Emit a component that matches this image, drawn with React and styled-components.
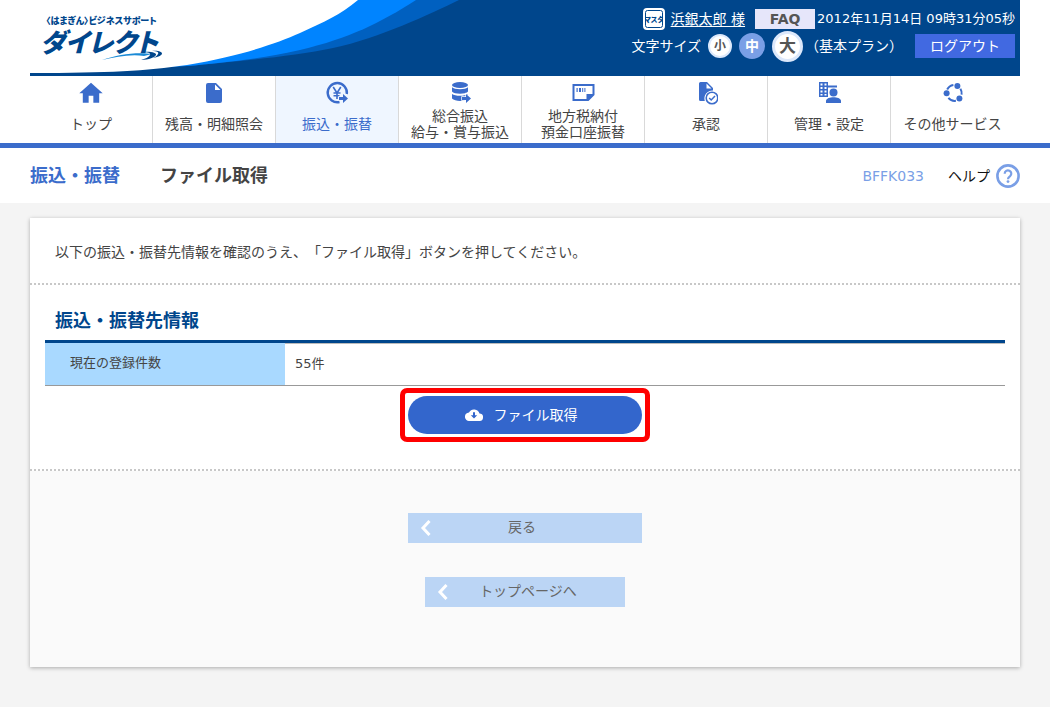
import React from 'react'
import styled, { createGlobalStyle, css } from 'styled-components'

const navy = '#00468c'
const blue = '#3b6ccb'

const GlobalStyle = createGlobalStyle`
  html {
    background-color: #f4f4f4;
  }

  body {
    margin: 0;
    color: #444;
    font-family: "DejaVu Sans", "Noto Sans CJK JP", sans-serif;
    font-size: 14px;
    line-height: 20px;
    text-spacing-trim: space-all;
  }

  *, *::before, *::after {
    box-sizing: border-box;
  }

  button {
    border: 0;
    padding: 0;
    cursor: pointer;
    font: inherit;
  }

  a {
    color: inherit;
    text-decoration: none;
  }
`

const Top = styled.div`
  background-color: white;
`

const Header = styled.header`
  background-color: ${navy};
  color: white;
  display: flex;
  height: 76px;
  justify-content: space-between;
  margin: 0 30px;
  position: relative;
`

const Wave = styled.svg`
  display: block;
  left: 0;
  position: absolute;
  top: 0;
`

const Logo = styled.a`
  color: ${navy};
  display: flex;
  flex-direction: column;
  font-family: "Liberation Sans", "Noto Sans CJK JP", sans-serif;
  font-feature-settings: "palt";
  font-weight: 900;
  padding: 15px 0 0 10px;
  position: relative;
  white-space: nowrap;
`

const LogoSub = styled.span`
  font-size: 9px;
  line-height: 13px;
  padding-left: 6px;
`

const LogoMain = styled.span`
  font-size: 26px;
  font-style: italic;
  line-height: 30px;
`

const Swoosh = styled.svg`
  left: 70px;
  position: absolute;
  top: 50px;
`

const HeaderTools = styled.div`
  display: flex;
  flex-direction: column;
  padding: 8px 5px 0 0;
  position: relative;
`

const ToolRow = styled.div`
  align-items: center;
  display: flex;
  height: ${props => props.$height}px;
  justify-content: flex-end;
`

const MasterBadge = styled.span`
  background-color: white;
  border: 2px solid white;
  border-radius: 4px;
  display: flex;
  margin-right: 6px;
`

const MasterText = styled.text`
  fill: ${navy};
  font-family: "Noto Sans CJK JP", sans-serif;
  font-feature-settings: "palt";
  font-size: 7px;
  font-weight: 900;
  text-anchor: middle;
`

const UserLink = styled.a`
  text-decoration: underline;
  text-underline-offset: 2px;
`

const FaqLink = styled.a`
  background-color: #e6e6fa;
  color: #555;
  font-weight: bold;
  margin: 0 2px 0 10px;
  text-align: center;
  width: 60px;
`

const Clock = styled.time`
  font-size: 13px;
`

const SizeButton = styled.button`
  background-color: ${props => (props.$active ? '#7a9fe6' : 'white')};
  border: ${props => props.$border}px solid ${props => (props.$active ? '#7a9fe6' : '#dce8fb')};
  border-radius: 50%;
  color: ${props => (props.$active ? 'white' : '#555')};
  font-size: ${props => props.$font}px;
  font-weight: bold;
  height: ${props => props.$size}px;
  line-height: 20px;
  margin-left: 7px;
  width: ${props => props.$size}px;
`

const Plan = styled.span`
  margin: 0 12px 0 2px;
`

const LogoutButton = styled.button`
  background-color: #4169e1;
  color: white;
  height: 24px;
  width: 100px;
`

const Nav = styled.nav`
  border-bottom: 5px solid ${blue};
  display: grid;
  grid-template-columns: repeat(8, 1fr);
  padding: 0 36px 0 30px;
`

const NavLink = styled.a`
  align-items: center;
  border-right: 1px solid #d9d9d9;
  display: flex;
  flex-direction: column;
  gap: 3px;
  padding: 5px 0 3px;

  &:last-child {
    border-right: 0;
  }

  svg {
    color: ${blue};
    display: block;
  }

  ${props => props.$active && css`
    background-color: #eff6ff;
    color: ${blue};
  `}
`

const NavLabel = styled.span`
  align-items: center;
  display: flex;
  height: 32px;
  line-height: 16px;
  text-align: center;
  white-space: pre-line;
`

const TitleBar = styled.div`
  align-items: center;
  display: flex;
  height: 55px;
  padding: 0 30px;
`

const Category = styled.p`
  color: ${blue};
  font-size: 18px;
  font-weight: bold;
  margin: 0 40px 0 0;
`

const Title = styled.h1`
  font-size: 18px;
  margin: 0;
`

const ScreenId = styled.span`
  color: #7a9fe6;
  margin-left: auto;
`

const HelpLink = styled.a`
  align-items: center;
  color: #111;
  display: flex;
  gap: 6px;
  margin-left: 24px;
`

const Card = styled.main`
  background-color: white;
  box-shadow: 0 1px 4px rgba(0, 0, 0, 0.3);
  margin: 15px 30px 40px;
`

const Intro = styled.p`
  border-bottom: 2px dotted #c8c8c8;
  margin: 0;
  padding: 24px 25px 21px;
`

const Section = styled.section`
  border-bottom: 2px dotted #c8c8c8;
  padding: 26px 15px 27px;
`

const SectionTitle = styled.h2`
  border-bottom: 3px solid ${navy};
  color: ${navy};
  font-size: 18px;
  line-height: 20px;
  margin: 0;
  padding: 0 10px 9px;
`

const Table = styled.table`
  border-bottom: 1px solid #999;
  border-spacing: 0;
  width: 100%;

  th {
    background-color: #a9d9ff;
    font-size: 13px;
    font-weight: normal;
    height: 42px;
    padding: 0 25px 2px;
    text-align: left;
    width: 25%;
  }

  td {
    border-top: 1px solid #bbb;
    font-size: 13px;
    padding: 0 10px 2px;
  }
`

const Highlight = styled.div`
  border: 5px solid red;
  border-radius: 7px;
  margin: 2px auto 0;
  padding: 3px;
  width: 250px;
`

const DownloadButton = styled.button`
  align-items: center;
  background-color: #3366cc;
  border-radius: 19px;
  color: white;
  display: flex;
  gap: 11px;
  height: 38px;
  justify-content: center;
  padding-right: 8px;
  width: 100%;
`

const Footer = styled.div`
  align-items: center;
  background-color: #fafafa;
  display: flex;
  flex-direction: column;
  gap: 34px;
  padding: 42px 0 60px;
`

const BackButton = styled.button`
  align-items: center;
  background-color: #bbd5f5;
  color: #666;
  display: flex;
  height: 30px;
  padding: 0 ${props => (props.$wide ? 30 : 18)}px 0 12px;
  width: ${props => (props.$wide ? 234 : 200)}px;

  span {
    flex: 1;
    padding-bottom: 2px;
  }
`

const Icon = ({ children, ...rest }) => (
  <svg width="24" height="24" viewBox="0 0 24 24" fill="currentColor" aria-hidden="true" {...rest}>
    {children}
  </svg>
)

const arrow = 'M14 16h4v-3l5 4.600-5 4.400v-3h-4z'

const HomeIcon = () => (
  <Icon viewBox="1.750 1.500 20.500 20.500">
    <path d="M10 20v-6h4v6h5v-8h3L12 3 2 12h3v8z" />
  </Icon>
)

const FileIcon = () => (
  <Icon>
    <path d="M6 2a2 2 0 0 0-2 2v16a2 2 0 0 0 2 2h12a2 2 0 0 0 2-2V8l-6-6zm7 7V3.500L18.500 9z" />
  </Icon>
)

const TransferIcon = () => (
  <Icon>
    <path
      d="M14.500 21A9.600 9.600 0 1 1 21.800 13"
      fill="none"
      stroke="currentColor"
      strokeWidth="2.400"
    />
    <path
      d="M8.200 6l3.800 6 3.800-6M12 12v6M8.500 12h7M8.500 14.800h6"
      fill="none"
      stroke="currentColor"
      strokeWidth="1.600"
    />
    <path d={arrow} stroke="#eff6ff" strokeWidth="1.400" paintOrder="stroke" />
  </Icon>
)

const BulkIcon = () => (
  <Icon>
    <ellipse cx="12" cy="4" rx="8" ry="3" />
    <path d="M4 6.200c2 2.600 14 2.600 16 0v4.300c-2 3-14 3-16 0z" />
    <path d="M4 13c3 2.400 13 2.400 16 0v4.500c-3 3.200-13 3.200-16 0z" />
    <path d={arrow} stroke="white" strokeWidth="1.400" paintOrder="stroke" />
  </Icon>
)

const TaxIcon = () => (
  <Icon>
    <path d="M1.500 3h22v11l-6 6h-16zm2 2v13h12v-5h6V5z" fillRule="evenodd" />
    <path d="M5.500 7h1.200v4H5.500zM8 7h2v4H8zM11.200 7h1v4h-1zM13.400 7h1v4h-1z" />
  </Icon>
)

const ApproveIcon = () => (
  <Icon>
    <path d="M6.500 1H13l6 6v2.500a8 8 0 0 0-8.200 10.500H6.500A1.500 1.500 0 0 1 5 18.500v-16A1.500 1.500 0 0 1 6.500 1zM12.500 2.500v5h5z" fillRule="evenodd" />
    <circle cx="18" cy="17" r="5.800" fill="none" stroke="currentColor" strokeWidth="1.600" />
    <path d="M15.200 17l2 2 3.800-3.900" fill="none" stroke="currentColor" strokeWidth="1.500" />
  </Icon>
)

const AdminIcon = () => (
  <Icon>
    <path
      d="M2 1h9v3.500h9v2h-9V16H2zM3.500 2.500v2h2v-2zm4 0v2h2v-2zm-4 3.500v2h2V6zm4 0v2h2V6zm-4 3.500v2h2v-2zm4 0v2h2v-2zm-4 3.500v1.500h2V13zm4 0v1.500h2V13z"
      fillRule="evenodd"
    />
    <circle cx="16.500" cy="11.500" r="4" stroke="white" paintOrder="stroke" />
    <path d="M9 22v-2.500c1-4.500 14-4.500 15 0V22z" />
  </Icon>
)

const OtherIcon = () => (
  <Icon>
    <path
      d="M6.200 8.500a8 8 0 0 1 6.200-4.600M19.400 7.700a8.500 8.500 0 0 1 1.200 6M14.900 19.800a8.200 8.200 0 0 1-7.500-3"
      fill="none"
      stroke="currentColor"
      strokeWidth="2"
    />
    <circle cx="16.400" cy="5" r="3" />
    <circle cx="5.600" cy="12.200" r="3" />
    <circle cx="18.400" cy="17.500" r="3" />
  </Icon>
)

const HelpIcon = () => (
  <svg width="24" height="24" viewBox="0 0 24 24" fill="none" stroke="#7a9fe6" aria-hidden="true">
    <circle cx="12" cy="12" r="10.600" strokeWidth="2.600" />
    <path d="M8.700 9.700a3.300 3.300 0 1 1 5.400 2.500c-1.300 1-2.100 1.500-2.100 3" strokeWidth="2.200" />
    <circle cx="12" cy="17.600" r="1.400" fill="#7a9fe6" stroke="none" />
  </svg>
)

const CloudIcon = () => (
  <svg width="18" height="12" viewBox="0 0 18 12" aria-hidden="true">
    <path
      d="M14.500 4.600A5.700 5.700 0 0 0 4 3.400 4.300 4.300 0 0 0 4.500 12h9.700a3.700 3.700 0 0 0 .3-7.400z"
      fill="white"
    />
    <path d="M8 3.200h2v3h2.200L9 9.400 5.800 6.200H8z" fill="#3366cc" />
  </svg>
)

const ChevronIcon = () => (
  <svg width="12" height="16" viewBox="0 0 12 16" aria-hidden="true">
    <path d="M9.500 1L3 8l6.500 7" fill="none" stroke="white" strokeWidth="3" />
  </svg>
)

const navItems = [
  { label: 'トップ', icon: HomeIcon },
  { label: '残高・明細照会', icon: FileIcon },
  { label: '振込・振替', icon: TransferIcon, active: true },
  { label: '総合振込\n給与・賞与振込', icon: BulkIcon },
  { label: '地方税納付\n預金口座振替', icon: TaxIcon },
  { label: '承認', icon: ApproveIcon },
  { label: '管理・設定', icon: AdminIcon },
  { label: 'その他サービス', icon: OtherIcon },
]

const fontSizes = [
  { label: '小', size: 24, font: 12, border: 2 },
  { label: '中', size: 26, font: 14, border: 2, active: true },
  { label: '大', size: 31, font: 17, border: 3 },
]

const App = () => (
  <>
    <GlobalStyle />
    <Top>
      <Header>
        <Wave width="430" height="73" viewBox="0 0 430 73" aria-hidden="true">
          <path d="M0 0H429C400 14 350 38 303 48C260 57 200 62 157 66L0 73z" fill="#0060c0" />
          <path d="M0 0H386C350 23 320 38 270 50C230 59 190 63 157 66L0 73z" fill="#0084ff" />
          <path d="M0 0H328C310 15 294 22 270 33C245 44 210 56 157 65C115 71 80 73 0 73z" fill="white" />
        </Wave>
        <Logo href="#">
          <LogoSub>〈はまぎん〉ビジネスサポート</LogoSub>
          <LogoMain>ダイレクト</LogoMain>
          <Swoosh width="64" height="12" viewBox="0 0 64 12" aria-hidden="true">
            <path d="M2 10C18 5 34 2 52 4L44 6C30 4 16 7 2 10z" fill="#1a8ad6" />
            <path d="M42 2c6 0 9 1 8 3s-5 4-9 5c8 0 14-3 15-5s-5-4-14-3zM52 1c5 0 7 1 6 3s-3 3-5 4c6-1 9-3 9-4.500S58 0 52 1z" fill={navy} />
          </Swoosh>
        </Logo>
        <HeaderTools>
          <ToolRow $height={22}>
            <MasterBadge>
              <svg width="18" height="18" viewBox="0 0 18 18" role="img" aria-label="マスタ">
                <rect x="0.500" y="0.500" width="17" height="17" rx="2" fill="white" stroke={navy} />
                <MasterText x="9" y="12">マスタ</MasterText>
              </svg>
            </MasterBadge>
            <UserLink href="#">浜銀太郎 様</UserLink>
            <FaqLink href="#">FAQ</FaqLink>
            <Clock>2012年11月14日 09時31分05秒</Clock>
          </ToolRow>
          <ToolRow $height={32}>
            <span>文字サイズ</span>
            {fontSizes.map(item => (
              <SizeButton
                key={item.label}
                type="button"
                $size={item.size}
                $font={item.font}
                $border={item.border}
                $active={item.active}
              >
                {item.label}
              </SizeButton>
            ))}
            <Plan>（基本プラン）</Plan>
            <LogoutButton type="button">ログアウト</LogoutButton>
          </ToolRow>
        </HeaderTools>
      </Header>
      <Nav>
        {navItems.map(({ label, icon: NavIcon, active }) => (
          <NavLink key={label} href="#" $active={active}>
            <NavIcon />
            <NavLabel>{label}</NavLabel>
          </NavLink>
        ))}
      </Nav>
      <TitleBar>
        <Category>振込・振替</Category>
        <Title>ファイル取得</Title>
        <ScreenId>BFFK033</ScreenId>
        <HelpLink href="#">
          ヘルプ
          <HelpIcon />
        </HelpLink>
      </TitleBar>
    </Top>
    <Card>
      <Intro>以下の振込・振替先情報を確認のうえ、「ファイル取得」ボタンを押してください。</Intro>
      <Section>
        <SectionTitle>振込・振替先情報</SectionTitle>
        <Table>
          <tbody>
            <tr>
              <th scope="row">現在の登録件数</th>
              <td>55件</td>
            </tr>
          </tbody>
        </Table>
        <Highlight>
          <DownloadButton type="button">
            <CloudIcon />
            ファイル取得
          </DownloadButton>
        </Highlight>
      </Section>
      <Footer>
        <BackButton type="button" $wide>
          <ChevronIcon />
          <span>戻る</span>
        </BackButton>
        <BackButton type="button">
          <ChevronIcon />
          <span>トップページへ</span>
        </BackButton>
      </Footer>
    </Card>
  </>
)

export default App
